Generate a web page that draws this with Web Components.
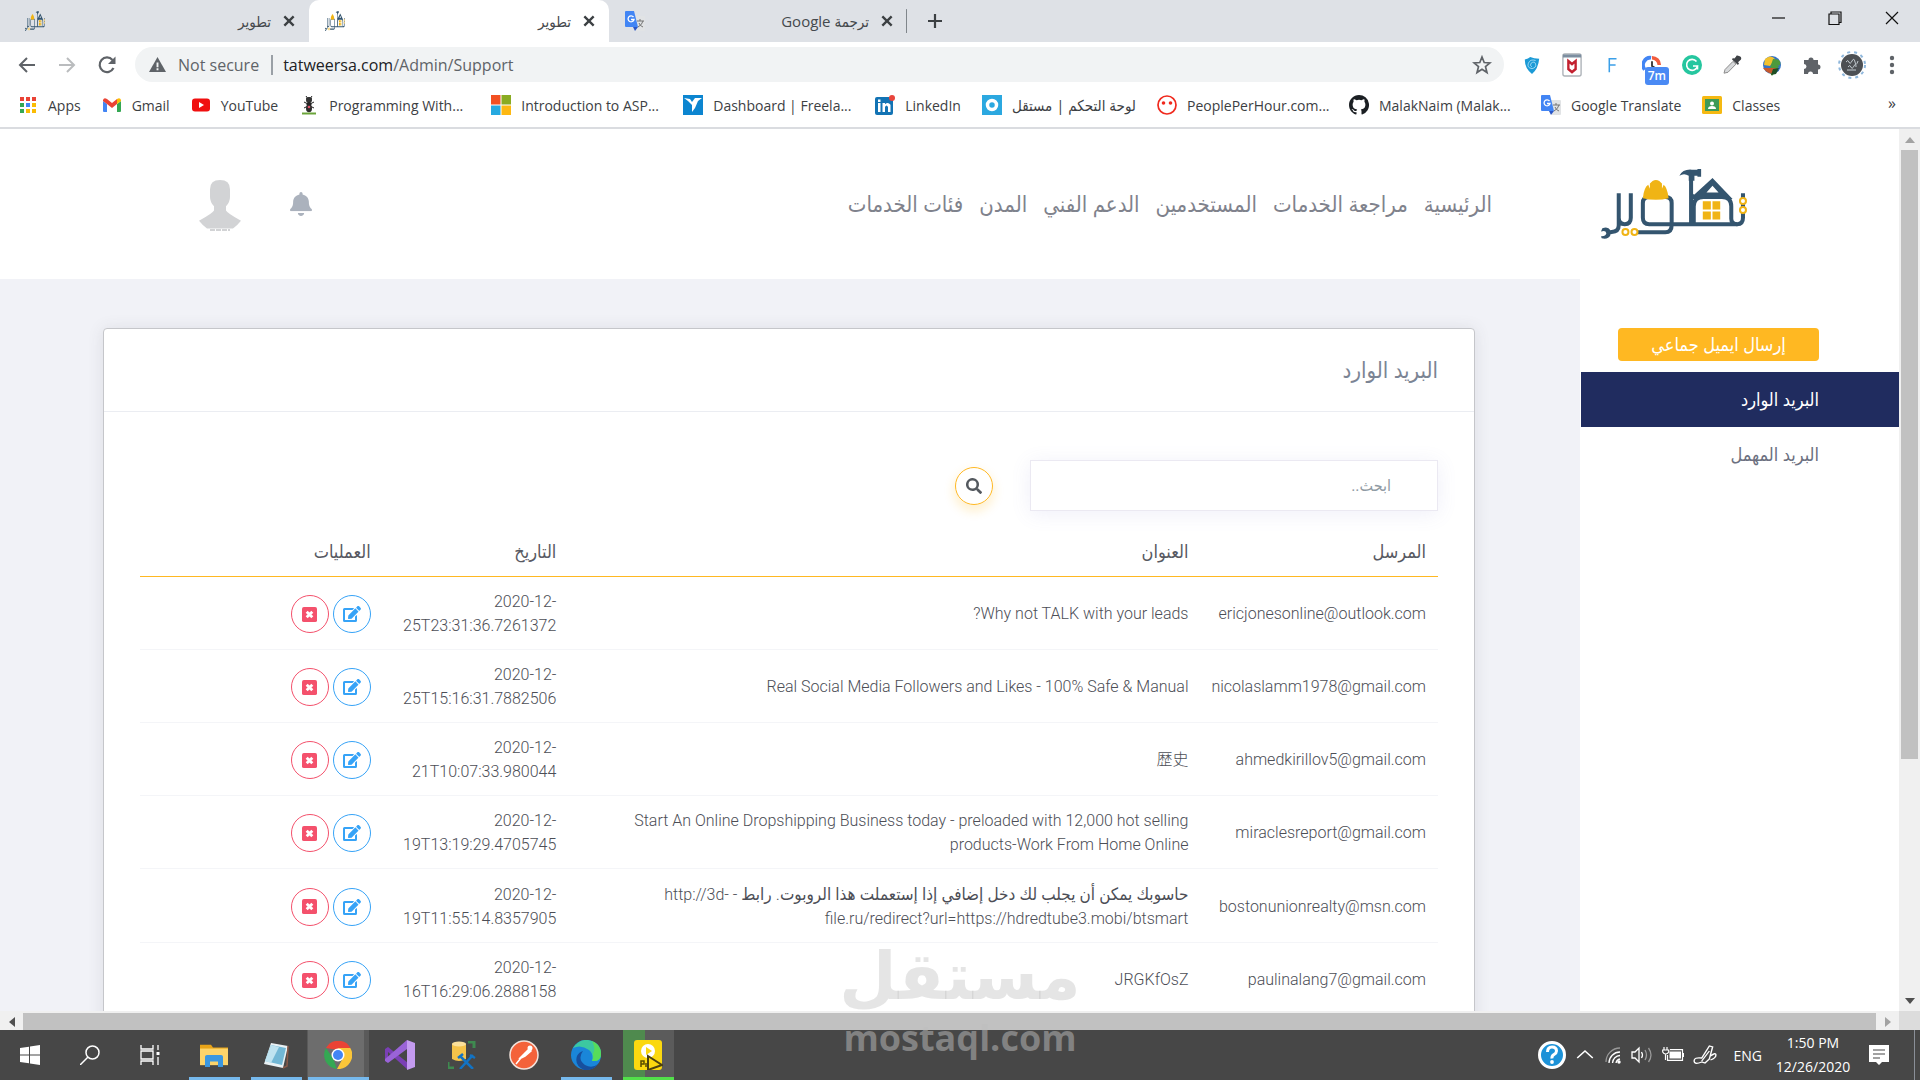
<!DOCTYPE html>
<html lang="en">
<head>
<meta charset="utf-8">
<title>تطوير</title>
<style>
  html, body { margin: 0; height: 100%; }
  body { font-family: "Open Sans", "DejaVu Sans Condensed", "DejaVu Sans", sans-serif; overflow: hidden; }
</style>
</head>
<body>
<browser-window>
  <tab-strip slot="tabs">
    <browser-tab icon="tatweer">تطوير</browser-tab>
    <browser-tab icon="tatweer" active>تطوير</browser-tab>
    <browser-tab icon="translate" last>ترجمة Google</browser-tab>
  </tab-strip>
  <address-bar slot="toolbar"></address-bar>
  <bookmarks-bar slot="bookmarks">
    <book-mark icon="apps">Apps</book-mark>
    <book-mark icon="gmail">Gmail</book-mark>
    <book-mark icon="youtube">YouTube</book-mark>
    <book-mark icon="ant" wide>Programming With...</book-mark>
    <book-mark icon="microsoft" wide>Introduction to ASP...</book-mark>
    <book-mark icon="freelancer" wide>Dashboard | Freela...</book-mark>
    <book-mark icon="linkedin">LinkedIn</book-mark>
    <book-mark icon="mostaql" arabic>لوحة التحكم | مستقل</book-mark>
    <book-mark icon="pph" wide>PeoplePerHour.com...</book-mark>
    <book-mark icon="github" wide>MalakNaim (Malak...</book-mark>
    <book-mark icon="translate">Google Translate</book-mark>
    <book-mark icon="classes">Classes</book-mark>
  </bookmarks-bar>
  <scroll-view slot="page">
    <site-header></site-header>
    <site-body>
      <site-sidebar></site-sidebar>
      <mail-card></mail-card>
    </site-body>
  </scroll-view>
  <task-bar slot="taskbar"></task-bar>
</browser-window>
<water-mark></water-mark>

<script>
const G = {
  tatweer: ['304 117 436 208', `<g fill="none" stroke="#34556f" stroke-width="12"><path d="M728 189V262Q728 281 711 281Q693 281 693 265V228Q693 200 665 200H610Q581 200 581 228V281"/><path d="M711 281H448Q429 281 429 262V218Q429 200 448 200H496Q515 200 515 218V284Q515 305 496 305H414M573 130V281"/><path d="M393 189V262Q393 281 375 281Q357 281 357 262M357 189V284Q357 303 336 304L326 306"/></g><path fill="#34556f" d="M538 137Q548 117 575 119H592V117H603V140H592V137H583V152H566V137Q552 128 538 137ZM637 144L697 206H573V190L583 193ZM637 167L619 187H655Z" fill-rule="evenodd"/><path fill="#34556f" d="M308 293Q325 286 332 299V314Q326 327 306 323L304 317Q318 318 320 308Q318 298 304 303Z"/><path fill="#f0b415" d="M429 204Q432 172 445 164L450 176V160L458 153Q468 147 478 153L486 160V176L491 164Q502 172 506 204Q468 213 429 204Z"/><path fill="#f0b415" d="M608 213h24v24h-24zM637 213h23v24h-23zM608 243h24v24h-24zM637 243h23v24h-23z"/><g fill="#fff" stroke="#f0b415" stroke-width="6"><circle cx="728" cy="212" r="9"/><circle cx="728" cy="239" r="9"/><circle cx="377" cy="304" r="9"/><circle cx="404" cy="304" r="9"/></g>`],
  translate: ['0 0 20 20', `<path fill="#e1e3e5" d="M8 5h11a1 1 0 0 1 1 1v13a1 1 0 0 1-1 1H11z"/><path d="M12 10h7M15 8v2M18 10q-1 4-5 6M14 12q1 3 4 4" stroke="#757575" fill="none"/><path fill="#4285f4" d="M1 0h8l4 16H1a1 1 0 0 1-1-1V1a1 1 0 0 1 1-1z"/><path fill="#2a56c6" d="M8 16h5l-3 4z"/><path d="M8.500 6A3 3 0 1 0 9 8.500H6" stroke="#fff" stroke-width="1.300" fill="none"/>`],
  close: ['0 0 12 12', `<path d="M2 2l8 8M10 2l-8 8" stroke="#3c4043" stroke-width="2"/>`],
  plus: ['0 0 16 16', `<path d="M8 1v14M1 8h14" stroke="#3c4043" stroke-width="2.200"/>`],
  min: ['0 0 14 14', `<path d="M1 7h13" stroke="#111" stroke-width="1.200"/>`],
  restore: ['0 0 14 14', `<path d="M1 3h10v10.500H1zM3 3V1h10v10.500h-2" stroke="#111" fill="none" stroke-width="1.200"/>`],
  exit: ['0 0 14 14', `<path d="M1 1l12 12M13 1L1 13" stroke="#111" stroke-width="1.200"/>`],
  back: ['0 0 20 20', `<path d="M18 10H3M10 3l-7 7 7 7" stroke="#5f6368" stroke-width="2" fill="none"/>`],
  forward: ['0 0 20 20', `<path d="M2 10h15M10 3l7 7-7 7" stroke="#babcbe" stroke-width="2" fill="none"/>`],
  reload: ['0 0 20 20', `<path d="M16.500 13A7.300 7.300 0 1 1 15.500 5" stroke="#5f6368" stroke-width="2.200" fill="none"/><path d="M18.500 1.500V9H11z" fill="#5f6368"/>`],
  warn: ['0 0 16 16', `<path fill="#5f6368" d="M8 1l8 14H0z"/><path stroke="#f1f3f4" stroke-width="1.800" d="M8 6v4.500M8 11.500v2"/>`],
  star: ['0 0 20 20', `<path d="M10 2l2.200 5.500 5.800.4-4.500 3.700 1.500 5.900-5-3.200-5 3.200 1.500-5.900L2 7.900l5.800-.4z" stroke="#5f6368" stroke-width="1.700" fill="none"/>`],
  shield: ['0 0 20 20', `<path fill="#1b9ad6" d="M2 4q4-1 6-3 4 2 10 2-1 11-8 17Q2 14 2 4z"/><path d="M14 5q-6-2-8 3t4 6q5-1 4-5t-5-1q-2 3 1 4" stroke="#a5dcf5" fill="none"/>`],
  mcafee: ['0 0 22 24', `<rect x="1" y="1" width="20" height="22" rx="2" fill="#fff" stroke="#adb2b8" stroke-width="1.500"/><path d="M1 3h20" stroke="#7c8ea0" stroke-width="3"/><path d="M7 8l4 3 4-3v8l-4 3-4-3z" fill="none" stroke="#c3202f" stroke-width="2.600"/>`],
  f: ['0 0 20 20', `<path d="M7 18V3h8M7 10h7" stroke="#3b9fe8" stroke-width="1.700" fill="none"/>`],
  clock: ['0 0 22 22', `<path d="M3 16A8 8 0 0 1 10 3" stroke="#4285f4" stroke-width="4" fill="none"/><path d="M11 3A8 8 0 0 1 19 11" stroke="#f25c3d" stroke-width="4" fill="none"/><path d="M11 7v5l3 2" stroke="#333" stroke-width="2" fill="none"/>`],
  grammarly: ['0 0 20 20', `<circle cx="10" cy="10" r="10" fill="#25c69f"/><path d="M14.500 6.500A5.500 5.500 0 1 0 15.500 11H11M15.500 11v3.500" stroke="#fff" stroke-width="1.600" fill="none"/>`],
  dropper: ['0 0 20 22', `<path d="M2 20l1-4 8-9 3 3-8 9z" fill="#d7d9db" stroke="#888"/><path d="M10 5l6 6 1-2-1-1 3-3q1-3-2-4t-3 1l-2 2-1-1z" fill="#3f4246"/>`],
  idm: ['0 0 22 22', `<circle cx="11" cy="11" r="9" fill="#3673c5"/><path fill="#f2c12e" d="M4 5q6-5 10 0l-5 7-6-1z"/><path fill="#4c9a3c" d="M11 22l-5-8h3l3-9q9 0 7 6l-3 1h2z"/><path d="M2 14q5 7 11 5l2-5" fill="#c6592d"/><path d="M10 21l5-1 3-6-6 1z" fill="#1f4f23"/>`],
  puzzle: ['0 0 20 20', `<path fill="#5f6368" d="M2 5h4.500a2.500 2.500 0 1 1 5 0H16v4.500a2.500 2.500 0 1 1 0 5V19h-5a2.500 2.500 0 0 0-5 0H2v-5a2.500 2.500 0 0 0 0-5z"/>`],
  profile: ['0 0 28 28', `<circle cx="14" cy="14" r="13" fill="none" stroke="#8fb7dc" stroke-width="2" stroke-dasharray="3 4"/><circle cx="14" cy="14" r="11" fill="#4d5054"/><path d="M8 11q2-3 3 0t3-1 3 1 3-1M10 16q2-3 3 0t3-1 2 1M9 19h9" stroke="#c2cad0" fill="none"/>`],
  dots: ['0 0 6 20', `<g fill="#5f6368"><circle cx="3" cy="3" r="2.200"/><circle cx="3" cy="10" r="2.200"/><circle cx="3" cy="17" r="2.200"/></g>`],
  apps: ['0 0 20 20', `<g fill="#ea4335"><path d="M2 2h4v4H2zM8 2h4v4H8zM14 2h4v4h-4z"/></g><path fill="#34a853" d="M2 8h4v4H2zM2 14h4v4H2z"/><path fill="#4285f4" d="M8 8h4v4H8z"/><path fill="#fbbc04" d="M14 8h4v4h-4zM8 14h4v4H8zM14 14h4v4h-4z"/>`],
  gmail: ['0 0 20 20', `<path fill="#4285f4" d="M1 6l4 3v8H2a1 1 0 0 1-1-1z"/><path fill="#34a853" d="M15 9l4-3v10a1 1 0 0 1-1 1h-3z"/><path fill="#ea4335" d="M1 5q1-3 4-1l5 4 5-4v5l-5 4-5-4-4-3z"/><path fill="#fbbc04" d="M15 4q3-2 4 1v1l-4 3z"/>`],
  youtube: ['0 0 20 20', `<rect x="1" y="3.500" width="18" height="13" rx="3" fill="#f00f0f"/><path fill="#fff" d="M8 7l5 3-5 3z"/>`],
  ant: ['0 0 20 20', `<path d="M7 1l2 3M13 1l-2 3M5 7l4 2M15 7l-4 2M5 13l4-2M15 13l-4-2M7 4q3-3 6 0" stroke="#222" fill="none"/><circle cx="10" cy="5" r="3" fill="#333"/><circle cx="10" cy="9.500" r="2.500" fill="#222"/><ellipse cx="10" cy="13.500" rx="3" ry="3.800" fill="#2c2c2c"/><circle cx="10" cy="12" r="1.300" fill="#e0536b"/><path d="M3 18.500h14" stroke="#6ba43a" stroke-width="2"/>`],
  microsoft: ['0 0 20 20', `<path fill="#f25022" d="M0 0h9.500v9.500H0z"/><path fill="#8aab22" d="M10.500 0H20v9.500h-9.500z"/><path fill="#26a9e0" d="M0 10.500h9.500V20H0z"/><path fill="#fdb813" d="M10.500 10.500H20V20h-9.500z"/>`],
  freelancer: ['0 0 20 20', `<path fill="#0c85d0" d="M0 0h20v20H0z"/><path fill="#fff" d="M1 3l6 1 2 3 3-4 7 0-4 3-3 7-3 4 0-7-4-4z"/>`],
  linkedin: ['0 0 20 20', `<rect y="2" width="18" height="18" rx="2" fill="#1273b4"/><path fill="#fff" d="M3 8h2.500v9H3zM3 4.500h2.500V7H3zM7.500 8H10v1.300q3-2.600 5.500.4V17H13v-5q-1.500-3-3 0v5H7.500z"/><circle cx="17" cy="3" r="3" fill="#e8453c"/>`],
  mostaql: ['0 0 20 20', `<path fill="#2ba8e0" d="M0 0h20v20H0z"/><circle cx="10" cy="10" r="4.500" fill="none" stroke="#fff" stroke-width="3.500"/>`],
  pph: ['0 0 20 20', `<circle cx="10" cy="10" r="9" fill="#fff" stroke="#f0291d" stroke-width="1.700"/><circle cx="6.500" cy="8" r="1.800" fill="#f0291d"/><circle cx="13.500" cy="8" r="1.800" fill="#f0291d"/>`],
  github: ['0 0 16 16', `<path fill="#1b1f23" d="M8 0C3.580 0 0 3.580 0 8c0 3.540 2.290 6.530 5.470 7.590.4.070.55-.17.55-.38v-1.490c-2.230.48-2.700-.94-2.700-.94-.36-.92-.89-1.170-.89-1.170-.72-.5.060-.49.060-.49.800.06 1.230.83 1.230.83.71 1.220 1.870.87 2.330.66.070-.52.280-.87.500-1.070-1.780-.2-3.640-.89-3.640-3.950 0-.87.310-1.590.82-2.150-.08-.2-.36-1.020.08-2.120 0 0 .67-.21 2.200.82a7.600 7.600 0 0 1 4 0c1.530-1.040 2.200-.82 2.200-.82.44 1.100.16 1.920.08 2.120.51.56.82 1.270.82 2.150 0 3.070-1.870 3.750-3.650 3.950.29.250.54.730.54 1.480v2.190c0 .21.150.46.550.38A8 8 0 0 0 8 0z"/>`],
  classes: ['0 0 20 20', `<rect y="1" width="20" height="18" rx="1.500" fill="#f5b912"/><path fill="#3e9a57" d="M3 4h14v12H3z"/><circle cx="10" cy="8.500" r="2" fill="#fff"/><path fill="#fff" d="M6 14q0-3 4-3t4 3z"/>`],
  bell: ['0 0 448 512', `<path fill="#abb2bd" d="M224 512c35 0 64-29 64-64H160c0 35 29 64 64 64zm215-149c-19-21-55-52-55-155 0-77-54-139-128-155V32a32 32 0 1 0-64 0v21C118 69 64 131 64 208c0 103-36 134-55 155-6 6-9 14-9 21 0 17 13 32 32 32h384c19 0 32-15 32-32 0-7-3-15-9-21z"/><path d="M0 420h448" stroke="#fff" stroke-width="22"/>`],
  person: ['0 0 42 52', `<path fill="#d2d3d5" d="M11 11Q11 0 21 0T31 11V20Q31 26 27 31V36Q28 39 42 48Q38 54 34 57H8Q4 54 0 48Q14 39 15 36V31Q11 26 11 20Z" transform="scale(1 .85)"/><path d="M11 50h20" stroke="#d2d3d5" stroke-width="2" stroke-dasharray="5 1"/>`],
  search: ['0 0 512 512', `<path fill="#54595f" d="M505 443L405 343c-4-4-11-7-17-7h-16a208 208 0 1 0-36 36v16c0 6 3 13 7 17l100 100c9 9 24 9 34 0l28-28c9-10 9-25 0-34zM208 336a128 128 0 1 1 0-256 128 128 0 0 1 0 256z"/>`],
  edit: ['0 0 576 512', `<path fill="#36a3f7" d="M402 83l90 90c4 4 4 10 0 14L274 405l-92 10c-13 2-23-9-22-22l10-92L388 83c4-4 10-4 14 0zm162-23l-48-49c-16-15-40-15-56 0l-35 36c-4 3-4 10 0 13l90 90c4 4 10 4 14 0l35-35c15-15 15-40 0-55zM384 346v102H64V128h230c3 0 6-1 8-3l40-40c8-8 3-21-8-21H48a48 48 0 0 0-48 48v352a48 48 0 0 0 48 48h352a48 48 0 0 0 48-48V306c0-11-13-16-20-9l-40 40c-3 3-4 6-4 9z"/>`],
  remove: ['0 0 16 16', `<rect width="16" height="16" rx="2" fill="#f4516c"/><path d="M5 5l6 6M11 5l-6 6" stroke="#fff" stroke-width="3"/>`],
  windows: ['0 0 20 20', `<path fill="#fff" d="M0 3l9-1.300V9.500H0zM10 1.500L20 0v9.500H10zM0 10.500h9v7.800L0 17zM10 10.500h10V20l-10-1.500z"/>`],
  find: ['0 0 20 20', `<circle cx="12.500" cy="7.500" r="6.500" fill="none" stroke="#fff" stroke-width="1.500"/><path d="M8 12l-8 8" stroke="#fff" stroke-width="1.500"/>`],
  taskview: ['0 0 20 20', `<path d="M1 0v4h12V0M1 20v-4h12v4M1 6h12v8H1zM18 0v5M18 12v8" stroke="#fff" stroke-width="1.300" fill="none"/><path fill="#fff" d="M16.500 7h3v3h-3z"/>`],
  explorer: ['0 0 28 26', `<path fill="#e8a317" d="M0 2h11l2 3h15v5H0z"/><path fill="#fdd46a" d="M0 6h28v18H0z"/><path fill="#3b97e0" d="M5 15q0-2 2-2h14q2 0 2 2v11h-5v-6h-8v6H5z"/>`],
  notepad: ['0 0 28 28', `<path fill="#e9f1f4" d="M9 2l17 3-5 22-19-4z"/><path fill="#72b7d5" d="M9 4l15 3-4 17L3 20z"/><path fill="#bfe3f0" d="M9 4l8 2-8 16-6-2z"/><path d="M26 5l-1 20-4 2" stroke="#8a5a49" fill="none" stroke-width="1.500"/>`],
  chrome: ['0 0 28 28', `<path fill="#ea4335" d="M2 7a14 14 0 0 1 24.500 0L14 9z"/><path fill="#34a853" d="M1.900 7L9 17l4 10.900A14 14 0 0 1 1.900 7z"/><path fill="#fbc639" d="M13 28a14 14 0 0 0 13.300-21H14l5 10z"/><circle cx="14" cy="14" r="6.500" fill="#fff"/><circle cx="14" cy="14" r="5" fill="#4285f4"/>`],
  vs: ['0 0 30 30', `<path fill="#7a3fb5" d="M0 9l3-2 20 16-1 6L3 12v9l-3-2z"/><path fill="#9a63d8" d="M0 19l22-19v9L3 23l-3-2z"/><path fill="#c49bf0" d="M22 0l8 3v24l-8 3z"/>`],
  ssms: ['0 0 28 28', `<path fill="#f5c34a" d="M4 3q7-4 14 0v15q-7 4-14 0z"/><ellipse cx="11" cy="3" rx="7" ry="2.500" fill="#fbe09b"/><path d="M20 1h6v6M0 21v6h6" stroke="#3f8a50" stroke-width="3" fill="none"/><path d="M12 15l13 13M25 14L12 28M10 17l5-4M22 14l5 3" stroke="#1273c4" stroke-width="2.500"/>`],
  postman: ['0 0 30 30', `<circle cx="15" cy="15" r="14" fill="#f4623a" stroke="#f3e3dc" stroke-width="1.500"/><path d="M7 24l9-11M16 13l4-4 2 2-6 5-6 3z" stroke="#fff" stroke-width="1.500" fill="#fff"/><circle cx="21" cy="8" r="2.500" fill="#fff"/>`],
  edge: ['0 0 30 30', `<circle cx="15" cy="15" r="15" fill="#1a86d9"/><path fill="#3cc8a0" d="M2 8Q8-1 17 0q13 2 13 14 0 8-9 7 2-7-3-11Q10 4 2 8z"/><path fill="#57dc5a" d="M21 1q9 4 9 13 0 8-9 7 2-3 1-7 3-6-1-13z"/><path fill="#174f9e" d="M12 11q-6 8 2 14 7 4 13-1-5 7-14 6Q3 25 6 16q2-4 6-5z"/>`],
  player: ['0 0 30 30', `<rect x="1" y="0" width="28" height="30" rx="3" fill="#fbd80f"/><circle cx="15" cy="11" r="7" fill="#fff"/><path fill="#fbd80f" d="M13 7l6 4-6 4z"/><path d="M8 27v-6h3v3H8M13 23v4" stroke="#5a4b00" fill="none" stroke-width="1.500"/><path d="M15 16l14 9-14 5z" fill="#fbd80f" stroke="#4b4110" stroke-width="2"/>`],
  help: ['0 0 28 28', `<circle cx="14" cy="14" r="12.500" fill="#1c92d8" stroke="#fff" stroke-width="3"/><path d="M9.500 11q0-5 4.500-5t4.500 4q0 2-2.500 3.500T14 17.500" stroke="#fff" stroke-width="3" fill="none"/><circle cx="14" cy="21" r="1.900" fill="#fff"/>`],
  up: ['0 0 18 18', `<path d="M2 12l7-7 7 7" stroke="#fff" stroke-width="1.400" fill="none"/>`],
  wifi: ['0 0 18 18', `<g fill="none" stroke-width="1.300"><path d="M2 16A14 14 0 0 1 16 2" stroke="#999"/><path d="M5 17A11 11 0 0 1 16 6M8.500 17A8 8 0 0 1 16 9.500M12 17a5 5 0 0 1 4-4" stroke="#fff"/></g><circle cx="15" cy="16" r="1.700" fill="#fff"/>`],
  sound: ['0 0 22 18', `<path d="M1 6h3l4-4v14l-4-4H1zM10.500 6q2 3 0 6" stroke="#fff" stroke-width="1.300" fill="none"/><path d="M14 4q3 5 0 10M17.500 2q5 7 0 14" stroke="#999" stroke-width="1.300" fill="none"/>`],
  battery: ['0 0 22 18', `<path d="M2 1v3M5 1v3M.7 4h6v2q-1 2-3 2t-3-2zM3.500 8v6M8 3.700h12.500v10.600H5.500V9" stroke="#fff" stroke-width="1.200" fill="none"/><path fill="#fff" d="M7.500 5.500h11.500v7H7.500zM20.500 7H22v4h-1.500z"/>`],
  pen: ['0 0 22 22', `<path d="M8 18q-7 3-7-1t7-3L15 2l3 1-3 12-4 4zM15 7l-7 10M16 12q5-4 5-1t-5 5" stroke="#fff" stroke-width="1.300" fill="none"/>`],
  notes: ['0 0 20 20', `<path fill="#fff" d="M0 0h20v17h-7l-3 3-3-3H0z"/><path d="M4 5h12M4 9h12M4 13h7" stroke="#474747" stroke-width="1.200"/>`]
};

function component(name, html, init) {
  const template = document.createElement('template');
  template.innerHTML = `<style>*,:host{box-sizing:border-box}button{font:inherit;border:0;background:none;padding:0;color:inherit}a{color:inherit;text-decoration:none}</style>` + html;
  customElements.define(name, class extends HTMLElement {
    connectedCallback() {
      if (this.shadowRoot) return;
      const root = this.attachShadow({ mode: 'open' });
      const content = template.content.cloneNode(true);
      if (init) init(this, content);
      root.append(content);
    }
  });
}

const passIcon = (host, root) => root.querySelector('ui-icon').setAttribute('name', host.getAttribute('icon'));

component('ui-icon', `<style>:host{display:inline-flex;flex:none}svg{display:block}</style><svg aria-hidden="true" preserveAspectRatio="none"></svg>`, (host, root) => {
  const [box, art] = G[host.getAttribute('name')];
  const svg = root.querySelector('svg');
  const w = host.getAttribute('w') || 20;
  svg.setAttribute('viewBox', box);
  svg.setAttribute('width', w);
  svg.setAttribute('height', host.getAttribute('h') || w);
  svg.innerHTML = art;
});

component('browser-window', `<style>
  :host{display:flex;flex-direction:column;height:100vh;background:#fff}
  slot{display:contents}
</style><slot name="tabs"></slot><slot name="toolbar"></slot><slot name="bookmarks"></slot><slot name="page"></slot><slot name="taskbar"></slot>`);

component('tab-strip', `<style>
  :host{display:flex;height:42px;background:#dee1e6;padding-left:9px}
  .new{width:56px;display:flex;align-items:center;justify-content:center}
  .win{margin-left:auto;display:flex;height:36px}
  .win button{width:57px;display:flex;align-items:center;justify-content:center}
</style><slot></slot><button class="new" aria-label="New tab"><ui-icon name="plus" w="16"></ui-icon></button>
<div class="win"><button aria-label="Minimize"><ui-icon name="min" w="14"></ui-icon></button><button aria-label="Restore"><ui-icon name="restore" w="14"></ui-icon></button><button aria-label="Close"><ui-icon name="exit" w="14"></ui-icon></button></div>`);

component('browser-tab', `<style>
  :host{display:flex;align-items:center;width:300px;padding:0 13px 0 16px;gap:11px;font-size:15px;color:#45494d;border-radius:10px 10px 0 0}
  :host([active]){background:#fff}
  :host([last]){width:298px;background:linear-gradient(#80868b,#80868b) right center/1px 24px no-repeat}
  .label{margin-left:auto}
  button{display:flex}
</style><ui-icon></ui-icon><span class="label" dir="rtl"><slot></slot></span><button aria-label="Close tab"><ui-icon name="close" w="14"></ui-icon></button>`, passIcon);

component('address-bar', `<style>
  :host{display:flex;align-items:center;height:45px;padding:0 8px 0 7px}
  button{width:40px;height:36px;display:flex;align-items:center;justify-content:center;position:relative}
  .omni{flex:1;display:flex;align-items:center;height:35px;border-radius:18px;background:#f1f3f4;margin:0 8px;padding:0 2px 0 14px;font-size:16px;color:#5f6368}
  .omni ui-icon{margin-right:12px}
  .omni button ui-icon{margin:0}
  .url{flex:1;border-left:2px solid #9aa0a6;margin-left:12px;padding-left:10px;line-height:20px;font-size:16px}
  .url b{font-weight:400;color:#202124}
  .badge{position:absolute;right:3px;bottom:-2px;background:#4a8af4;color:#fff;border-radius:3px;font-size:12px;font-weight:600;line-height:18px;padding:0 3px}
</style>
<button aria-label="Back"><ui-icon name="back"></ui-icon></button><button aria-label="Forward"><ui-icon name="forward"></ui-icon></button><button aria-label="Reload"><ui-icon name="reload"></ui-icon></button>
<div class="omni"><ui-icon name="warn" w="17"></ui-icon><span>Not secure</span><div class="url" role="textbox" aria-label="Address" contenteditable="true" spellcheck="false"><b>tatweersa.com</b>/Admin/Support</div><button aria-label="Bookmark"><ui-icon name="star"></ui-icon></button></div>
<button aria-label="Shield"><ui-icon name="shield" w="18"></ui-icon></button><button aria-label="McAfee"><ui-icon name="mcafee" w="20" h="24"></ui-icon></button><button aria-label="F"><ui-icon name="f" w="18"></ui-icon></button><button aria-label="Timer"><ui-icon name="clock" w="20"></ui-icon><span class="badge">7m</span></button><button aria-label="Grammarly"><ui-icon name="grammarly"></ui-icon></button><button aria-label="Picker"><ui-icon name="dropper"></ui-icon></button><button aria-label="Downloads"><ui-icon name="idm" w="22"></ui-icon></button><button aria-label="Extensions"><ui-icon name="puzzle"></ui-icon></button><button aria-label="Profile"><ui-icon name="profile" w="28"></ui-icon></button><button aria-label="Menu"><ui-icon name="dots" w="6" h="20"></ui-icon></button>`);

component('bookmarks-bar', `<style>
  :host{display:flex;align-items:center;gap:21px;height:42px;padding:0 24px 4px 18px;border-bottom:2px solid #dadce0;font-size:14px;color:#3c4043}
  button{margin-left:auto;font-size:16px;padding-bottom:4px}
</style><slot></slot><button aria-label="More bookmarks">»</button>`);

component('book-mark', `<style>
  a{display:flex;align-items:center;gap:10px;white-space:nowrap}
  :host([wide]) span{width:141px}
  :host([arabic]) span{font-size:15px}
</style><a href="#"><ui-icon></ui-icon><span><slot></slot></span></a>`, passIcon);

component('scroll-view', `<style>
  :host{flex:1;min-height:0;display:grid;grid-template:minmax(0,1fr) 19px/minmax(0,1fr) 21px;background:#f0f0f0}
  .page{overflow:hidden;background:#f1f2f7;direction:rtl;display:flex;flex-direction:column;color:#575962;font-family:Roboto,"DejaVu Sans Condensed","DejaVu Sans","Noto Sans CJK JP",sans-serif}
  .v{display:flex;flex-direction:column;align-items:center}
  .v i{height:21px;display:flex;align-items:center}
  .v .thumb{width:17px;height:69%;margin-bottom:auto;background:#c1c1c1}
  .h{display:flex;align-items:center;padding-top:2px}
  .h .thumb{flex:1;height:17px;background:#c1c1c1}
  .h i{width:23px;display:flex;justify-content:center}
  .corner{background:#dcdcdc}
</style><div class="page"><slot></slot></div>
<div class="v"><i><svg width="10" height="6"><path d="M5 0l5 6H0z" fill="#a3a3a3"/></svg></i><div class="thumb"></div><i><svg width="10" height="6"><path d="M5 6l5-6H0z" fill="#505050"/></svg></i></div>
<div class="h"><i><svg width="6" height="10"><path d="M0 5l6-5v10z" fill="#505050"/></svg></i><div class="thumb"></div><i><svg width="6" height="10"><path d="M6 5L0 0v10z" fill="#a3a3a3"/></svg></i></div><div class="corner"></div>`);

component('site-header', `<style>
  :host{display:flex;align-items:center;flex:none;height:150px;background:#fff;padding:0 152px 0 199px}
  nav{display:flex;gap:16px;margin-right:109px;font-size:22px;color:#7f828c;white-space:nowrap}
  .actions{margin-right:auto;display:flex;align-items:center;gap:49px;padding-top:4px}
</style><ui-icon name="tatweer" w="146" h="70"></ui-icon>
<nav><a href="#">الرئيسية</a><a href="#">مراجعة الخدمات</a><a href="#">المستخدمين</a><a href="#">الدعم الفني</a><a href="#">المدن</a><a href="#">فئات الخدمات</a></nav>
<div class="actions"><button aria-label="Notifications"><ui-icon name="bell" w="22" h="24"></ui-icon></button><ui-icon name="person" w="42" h="52"></ui-icon></div>`);

component('site-body', `<style>:host{display:flex;flex:1;min-height:0;align-items:stretch}</style><slot></slot>`);

component('site-sidebar', `<style>
  :host{flex:none;width:319px;background:#fff;padding-top:49px;font-size:18px;display:flex;flex-direction:column}
  button{height:33px;margin:0 80px 11px 38px;border-radius:4px;background:#ffb822;color:#fff}
  a{height:55px;display:flex;align-items:center;padding-right:80px;margin-left:1px;color:#6c7080}
  a.on{background:#202c5f;color:#fff}
</style><button>إرسال ايميل جماعي</button><a class="on" href="#">البريد الوارد</a><a href="#">البريد المهمل</a>`);

component('mail-card', `<style>
  :host{flex:1;min-width:0;padding:49px 105px 0 103px}
  section{background:#fff;border:1px solid #c5c6ca;border-radius:4px;box-shadow:0 1px 15px 1px rgba(69,65,78,.1);min-height:800px}
  h1{margin:0;height:83px;display:flex;align-items:center;padding:0 36px;border-bottom:1px solid #ebedf2;font-size:22px;font-weight:400;color:#7b8494}
  .body{padding:48px 36px 0}
  form{display:flex;align-items:center;gap:37px;margin-bottom:17px}
  input{width:408px;height:51px;border:1px solid #ebe9f2;box-shadow:0 3px 20px rgba(113,106,202,.11);padding:0 46px;font:inherit;font-size:16px;outline:0}
  input::placeholder{color:#8f9aa3;opacity:1}
  .round{width:38px;height:38px;border-radius:50%;border:1px solid #ffb822;display:inline-flex;align-items:center;justify-content:center}
  .go{box-shadow:0 5px 10px 2px rgba(255,184,34,.19)}
  .edit{border-color:#36a3f7}.del{border-color:#f4516c}
  table{width:100%;table-layout:fixed;border-collapse:collapse;font-size:16px;line-height:24px}
  th,td{padding:13px 12px 11px;text-align:right;font-weight:400}
  th{height:48px;border-bottom:1px solid #ffb822;font-size:18px;padding:12px}
  td{border-bottom:1px solid #f4f5f8;height:73px;font-weight:300;color:#4c4e56}
  td:nth-child(2){padding-left:40px}
  .ar{font-size:17px}
  .ops{display:flex;gap:4px}
  .c1{width:18.300%}.c2{width:48.700%}.c3{width:14.300%}
</style><section><h1>البريد الوارد</h1><div class="body">
<form><input type="search" aria-label="ابحث" placeholder="ابحث.."><button type="button" class="round go" aria-label="بحث"><ui-icon name="search" w="16"></ui-icon></button></form>
<table><colgroup><col class="c1"><col class="c2"><col class="c3"><col></colgroup><thead><tr><th>المرسل</th><th>العنوان</th><th>التاريخ</th><th>العمليات</th></tr></thead><tbody></tbody></table></div></section>`, (host, root) => {
  const rows = [
    ['ericjonesonline@outlook.com', 'Why not TALK with your leads?', '2020-12-25T23:31:36.7261372'],
    ['nicolaslamm1978@gmail.com', 'Real Social Media Followers and Likes - 100% Safe &amp; Manual', '2020-12-25T15:16:31.7882506'],
    ['ahmedkirillov5@gmail.com', '歴史', '2020-12-21T10:07:33.980044'],
    ['miraclesreport@gmail.com', 'Start An Online Dropshipping Business today - preloaded with 12,000 hot selling products-Work From Home Online', '2020-12-19T13:19:29.4705745'],
    ['bostonunionrealty@msn.com', '<span class="ar">حاسوبك يمكن أن يجلب لك دخل إضافي إذا إستعملت هذا الروبوت. رابط</span> - http://3d-<wbr><span>file.ru/redirect?url=https://hdredtube3.mobi/btsmart</span>', '2020-12-19T11:55:14.8357905'],
    ['paulinalang7@gmail.com', 'JRGKfOsZ', '2020-12-16T16:29:06.2888158']
  ];
  const body = root.querySelector('tbody');
  for (const row of rows) {
    const tr = body.insertRow();
    for (const text of row) tr.insertCell().innerHTML = text;
    tr.insertCell().innerHTML = '<div class="ops"><button class="round edit" aria-label="Edit"><ui-icon name="edit" w="18" h="16"></ui-icon></button><button class="round del" aria-label="Delete"><ui-icon name="remove" w="15"></ui-icon></button></div>';
  }
});

component('task-bar', `<style>
  :host{flex:none;height:50px;background:#474747;display:flex;color:#fff}
  button{width:60px;display:flex;align-items:center;justify-content:center}
  .app{width:62px}
  .apps{display:flex;padding-left:3px}
  .run{background:linear-gradient(#76b9ed,#76b9ed) 6px 100%/51px 3px no-repeat}
  .on{background:linear-gradient(#76b9ed,#76b9ed) 1px 100%/61px 3px no-repeat,linear-gradient(#6d6d6d,#6d6d6d) 1px 0/56px 100% no-repeat,#5a5a5a}
  .busy{background:linear-gradient(#52e04a,#52e04a) 6px 100%/51px 3px no-repeat,linear-gradient(#4f8a4e,#4f8a4e) 6px 0/22px 100% no-repeat,linear-gradient(#5b5b5b,#5b5b5b) 28px 0/29px 100% no-repeat}
  .tray{margin-left:auto;display:flex;align-items:center;gap:9px;font-size:14px;padding-right:5px}
  .tray button{width:auto}
  .time{text-align:center;line-height:24px;width:84px;margin-right:5px}
  .lang{margin-left:8px}
  .end{border-right:1px solid #8a8f98;height:50px;width:17px}
</style>
<button aria-label="Start"><ui-icon name="windows"></ui-icon></button><button aria-label="Search"><ui-icon name="find"></ui-icon></button><button aria-label="Task view"><ui-icon name="taskview"></ui-icon></button>
<div class="apps">
<button class="app run" aria-label="Explorer"><ui-icon name="explorer" w="28" h="24"></ui-icon></button><button class="app run" aria-label="Notepad"><ui-icon name="notepad" w="28"></ui-icon></button><button class="app on" aria-label="Chrome"><ui-icon name="chrome" w="28"></ui-icon></button><button class="app" aria-label="Visual Studio"><ui-icon name="vs" w="30"></ui-icon></button><button class="app" aria-label="Management Studio"><ui-icon name="ssms" w="28"></ui-icon></button><button class="app" aria-label="Postman"><ui-icon name="postman" w="30"></ui-icon></button><button class="app run" aria-label="Edge"><ui-icon name="edge" w="30"></ui-icon></button><button class="app busy" aria-label="Player"><ui-icon name="player" w="30"></ui-icon></button></div>
<div class="tray"><ui-icon name="help" w="28"></ui-icon><ui-icon name="up" w="20" h="18"></ui-icon><ui-icon name="wifi" w="18"></ui-icon><ui-icon name="sound" w="22" h="18"></ui-icon><ui-icon name="battery" w="22" h="18"></ui-icon><ui-icon name="pen" w="24" h="22"></ui-icon><span class="lang">ENG</span><div class="time">1:50 PM<br>12/26/2020</div><button aria-label="Notifications"><ui-icon name="notes"></ui-icon></button><span class="end"></span></div>`);

component('water-mark', `<style>
  :host{position:absolute;left:50%;bottom:21px;transform:translateX(-50%);text-align:center;color:rgba(190,190,190,.4);font-weight:700;pointer-events:none;white-space:nowrap}
  div{font-family:"DejaVu Sans",sans-serif;font-size:66px;line-height:80px}
  span{display:block;font-size:36px;line-height:42px;color:rgba(190,190,190,.5)}
</style><div dir="rtl">مستقل</div><span>mostaql.com</span>`);
</script>
</body>
</html>
